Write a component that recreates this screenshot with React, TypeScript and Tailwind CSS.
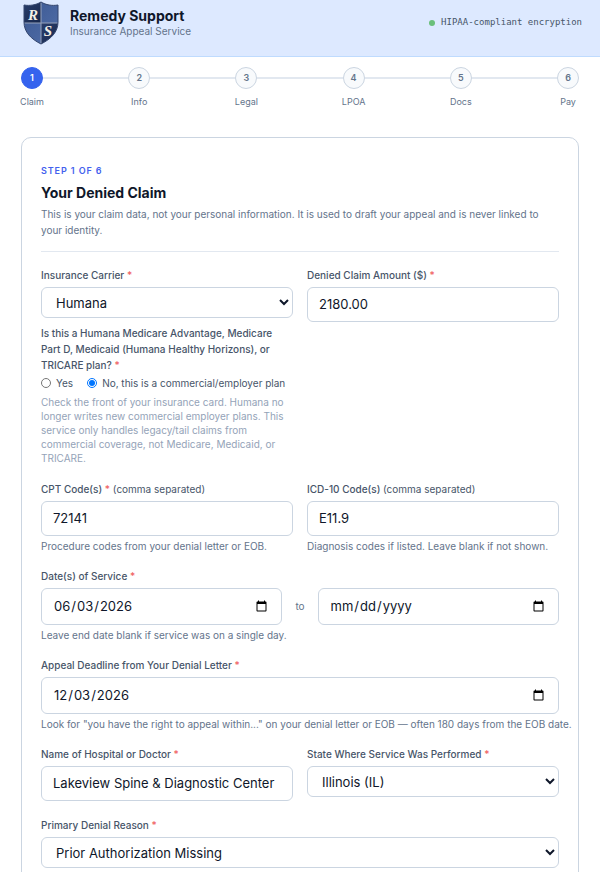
import React, { useState } from 'react';

interface Step {
  id: number;
  label: string;
}

interface FieldProps {
  id: string;
  label: string;
  required?: boolean;
  note?: string;
  hint?: string;
  children: React.ReactNode;
}

const STEPS: Step[] = [
  { id: 1, label: 'Claim' },
  { id: 2, label: 'Info' },
  { id: 3, label: 'Legal' },
  { id: 4, label: 'LPOA' },
  { id: 5, label: 'Docs' },
  { id: 6, label: 'Pay' },
];

const CARRIERS = ['Aetna', 'Cigna', 'Humana', 'UnitedHealthcare'];
const STATES = ['Illinois (IL)', 'Indiana (IN)', 'Iowa (IA)'];
const REASONS = ['Prior Authorization Missing', 'Not Medically Necessary', 'Out of Network'];

const boxClass = 'block w-full rounded-md border border-[#cbd5e1] bg-white text-[13px] text-[#0f172a]';
const inputClass = `${boxClass} h-[35px] px-[11px] pb-[2px]`;
const dateClass = `${boxClass} h-[37px] px-[11px]`;
const selectClass = `${boxClass} h-[31px] px-[10px]`;

const Star = () => <span className="text-[#f05f5f]">*</span>;

const Shield = () => (
  <svg viewBox="0 0 36 44" className="h-11 w-9 shrink-0" aria-hidden="true">
    <defs>
      <clipPath id="shield">
        <path d="M18 1C13 4 7 5 1 4v17c0 10 7 17 17 22 10-5 17-12 17-22V4C29 5 23 4 18 1Z" />
      </clipPath>
      <linearGradient id="dark" x1="0" y1="0" x2="1" y2="1">
        <stop offset="0" stopColor="#2a3f6d" />
        <stop offset="1" stopColor="#16264b" />
      </linearGradient>
      <linearGradient id="light" x1="0" y1="0" x2="1" y2="1">
        <stop offset="0" stopColor="#405d97" />
        <stop offset="1" stopColor="#4c69a3" />
      </linearGradient>
    </defs>
    <g clipPath="url(#shield)">
      <rect width="18" height="22" fill="url(#dark)" />
      <rect x="18" width="18" height="22" fill="url(#light)" />
      <rect y="22" width="18" height="22" fill="url(#light)" />
      <rect x="18" y="22" width="18" height="22" fill="url(#dark)" />
      <path d="M18 0v44M0 22h36" stroke="#97a3bb" strokeWidth="1" />
    </g>
    <path
      d="M18 1C13 4 7 5 1 4v17c0 10 7 17 17 22 10-5 17-12 17-22V4C29 5 23 4 18 1Z"
      fill="none"
      stroke="#33456d"
      strokeWidth="1"
    />
    <text x="10" y="19" textAnchor="middle" fill="#f3efe6" className="font-['Liberation_Serif',serif] text-[15px] font-bold italic">R</text>
    <text x="25" y="35" textAnchor="middle" fill="#f3efe6" className="font-['Liberation_Serif',serif] text-[15px] font-bold italic">S</text>
  </svg>
);

const Field: React.FC<FieldProps> = ({ id, label, required, note, hint, children }) => (
  <div className="min-w-0">
    <label htmlFor={id} className="mb-1 block text-[10px] leading-4 font-medium text-[#475569]">
      {label} {required && <Star />}
      {note && <span className="font-normal"> {note}</span>}
    </label>
    {children}
    {hint && <p className="mt-1 -mr-4 text-[10px] leading-3 text-[#64748b]">{hint}</p>}
  </div>
);

const Header = () => (
  <header className="flex h-[57px] items-center justify-between border-b border-[#bfdbfe] bg-[#dde9ff] pr-[18px] pb-[10px] pl-[23px]">
    <div className="flex items-center gap-[11px]">
      <Shield />
      <div>
        <h1 className="text-[14px] leading-4 font-bold text-[#0f172a]">Remedy Support</h1>
        <p className="text-[10px] leading-[14px] text-[#64748b]">Insurance Appeal Service</p>
      </div>
    </div>
    <div className="flex items-center gap-[6px] font-['DejaVu_Sans_Mono',monospace] text-[9px] text-[#475569]">
      <span className="size-[6px] rounded-full bg-[#6abf7b]" />
      HIPAA-compliant encryption
    </div>
  </header>
);

const Stepper: React.FC<{ current: number }> = ({ current }) => (
  <ol className="mx-[21px] mt-[10px] flex">
    {STEPS.map((step, i) => (
      <React.Fragment key={step.id}>
        {i > 0 && <li aria-hidden="true" className="mt-[10px] h-[2px] flex-1 bg-[#e2e8f0]" />}
        <li className="flex w-[22px] flex-col items-center gap-[6px]">
          <span
            className={`flex size-[22px] shrink-0 items-center justify-center rounded-full border text-[9px] font-semibold ${
              step.id === current ? 'border-[#3563ee] bg-[#3563ee] text-white' : 'border-[#cbd5e1] bg-[#f8fafc] text-[#64748b]'
            }`}
          >
            {step.id}
          </span>
          <span className="text-[9px] leading-[14px] text-[#64748b]">{step.label}</span>
        </li>
      </React.Fragment>
    ))}
  </ol>
);

const App: React.FC = () => {
  const [carrier, setCarrier] = useState('Humana');
  const [amount, setAmount] = useState('2180.00');
  const [govPlan, setGovPlan] = useState('no');
  const [cpt, setCpt] = useState('72141');
  const [icd, setIcd] = useState('E11.9');
  const [startDate, setStartDate] = useState('2026-06-03');
  const [endDate, setEndDate] = useState('');
  const [deadline, setDeadline] = useState('2026-12-03');
  const [provider, setProvider] = useState('Lakeview Spine & Diagnostic Center');
  const [state, setState] = useState('Illinois (IL)');
  const [reason, setReason] = useState('Prior Authorization Missing');

  return (
    <div className="bg-white font-[Inter,sans-serif] text-[#0f172a]">
      <Header />
      <Stepper current={1} />

      <main className="mx-[21px] mt-7 rounded-[10px] border border-[#cbd5e1] bg-white px-[19px] pt-[26px] pb-6">
        <div className="border-b border-[#e2e8f0] pb-[13px]">
          <p className="text-[9px] leading-[14px] font-semibold tracking-widest text-[#4361ee]">STEP 1 OF 6</p>
          <h2 className="mt-1 text-[14px] leading-[22px] font-bold">Your Denied Claim</h2>
          <p className="mt-[2px] text-[10px] leading-4 text-[#64748b]">
            This is your claim data, not your personal information. It is used to draft your appeal and is never linked to your identity.
          </p>
        </div>

        <form className="mt-[15px] flex flex-col gap-4">
          <div className="grid grid-cols-2 gap-[14px]">
            <div className="min-w-0">
              <Field id="carrier" label="Insurance Carrier" required>
                <select id="carrier" value={carrier} onChange={(e) => setCarrier(e.target.value)} className={selectClass}>
                  {CARRIERS.map((c) => (
                    <option key={c}>{c}</option>
                  ))}
                </select>
              </Field>
              <fieldset className="mt-[7px] min-w-0">
                <legend className="text-[10px] leading-4 font-medium text-[#475569]">
                  Is this a Humana Medicare Advantage, Medicare Part D, Medicaid (Humana Healthy Horizons), or TRICARE plan? <Star />
                </legend>
                <div className="mt-[2px] flex gap-[14px] text-[10px] leading-4 text-[#475569]">
                  <label className="flex items-center gap-[5px]">
                    <input type="radio" name="plan" checked={govPlan === 'yes'} onChange={() => setGovPlan('yes')} className="size-[10px]" />
                    Yes
                  </label>
                  <label className="flex items-center gap-[5px]">
                    <input type="radio" name="plan" checked={govPlan === 'no'} onChange={() => setGovPlan('no')} className="size-[10px]" />
                    No, this is a commercial/employer plan
                  </label>
                </div>
                <p className="mt-1 text-[10px] leading-[14px] text-[#94a3b8]">
                  Check the front of your insurance card. Humana no longer writes new commercial employer plans. This service only handles
                  legacy/tail claims from commercial coverage, not Medicare, Medicaid, or TRICARE.
                </p>
              </fieldset>
            </div>
            <Field id="amount" label="Denied Claim Amount ($)" required>
              <input id="amount" type="text" value={amount} onChange={(e) => setAmount(e.target.value)} className={inputClass} />
            </Field>
          </div>

          <div className="grid grid-cols-2 gap-[14px]">
            <Field id="cpt" label="CPT Code(s)" required note="(comma separated)" hint="Procedure codes from your denial letter or EOB.">
              <input id="cpt" type="text" value={cpt} onChange={(e) => setCpt(e.target.value)} className={inputClass} />
            </Field>
            <Field id="icd" label="ICD-10 Code(s)" note="(comma separated)" hint="Diagnosis codes if listed. Leave blank if not shown.">
              <input id="icd" type="text" value={icd} onChange={(e) => setIcd(e.target.value)} className={inputClass} />
            </Field>
          </div>

          <Field id="start" label="Date(s) of Service" required hint="Leave end date blank if service was on a single day.">
            <div className="flex items-center gap-[13px]">
              <input id="start" type="date" value={startDate} onChange={(e) => setStartDate(e.target.value)} className={dateClass} />
              <label htmlFor="end" className="text-[10px] text-[#64748b]">to</label>
              <input id="end" type="date" value={endDate} onChange={(e) => setEndDate(e.target.value)} className={dateClass} />
            </div>
          </Field>

          <Field
            id="deadline"
            label="Appeal Deadline from Your Denial Letter"
            required
            hint={'Look for "you have the right to appeal within..." on your denial letter or EOB — often 180 days from the EOB date.'}
          >
            <input id="deadline" type="date" value={deadline} onChange={(e) => setDeadline(e.target.value)} className={dateClass} />
          </Field>

          <div className="grid grid-cols-2 gap-[14px]">
            <Field id="provider" label="Name of Hospital or Doctor" required>
              <input id="provider" type="text" value={provider} onChange={(e) => setProvider(e.target.value)} className={inputClass} />
            </Field>
            <Field id="state" label="State Where Service Was Performed" required>
              <select id="state" value={state} onChange={(e) => setState(e.target.value)} className={selectClass}>
                {STATES.map((s) => (
                  <option key={s}>{s}</option>
                ))}
              </select>
            </Field>
          </div>

          <Field id="reason" label="Primary Denial Reason" required>
            <select id="reason" value={reason} onChange={(e) => setReason(e.target.value)} className={selectClass}>
              {REASONS.map((r) => (
                <option key={r}>{r}</option>
              ))}
            </select>
          </Field>
        </form>
      </main>
    </div>
  );
};

export default App;
